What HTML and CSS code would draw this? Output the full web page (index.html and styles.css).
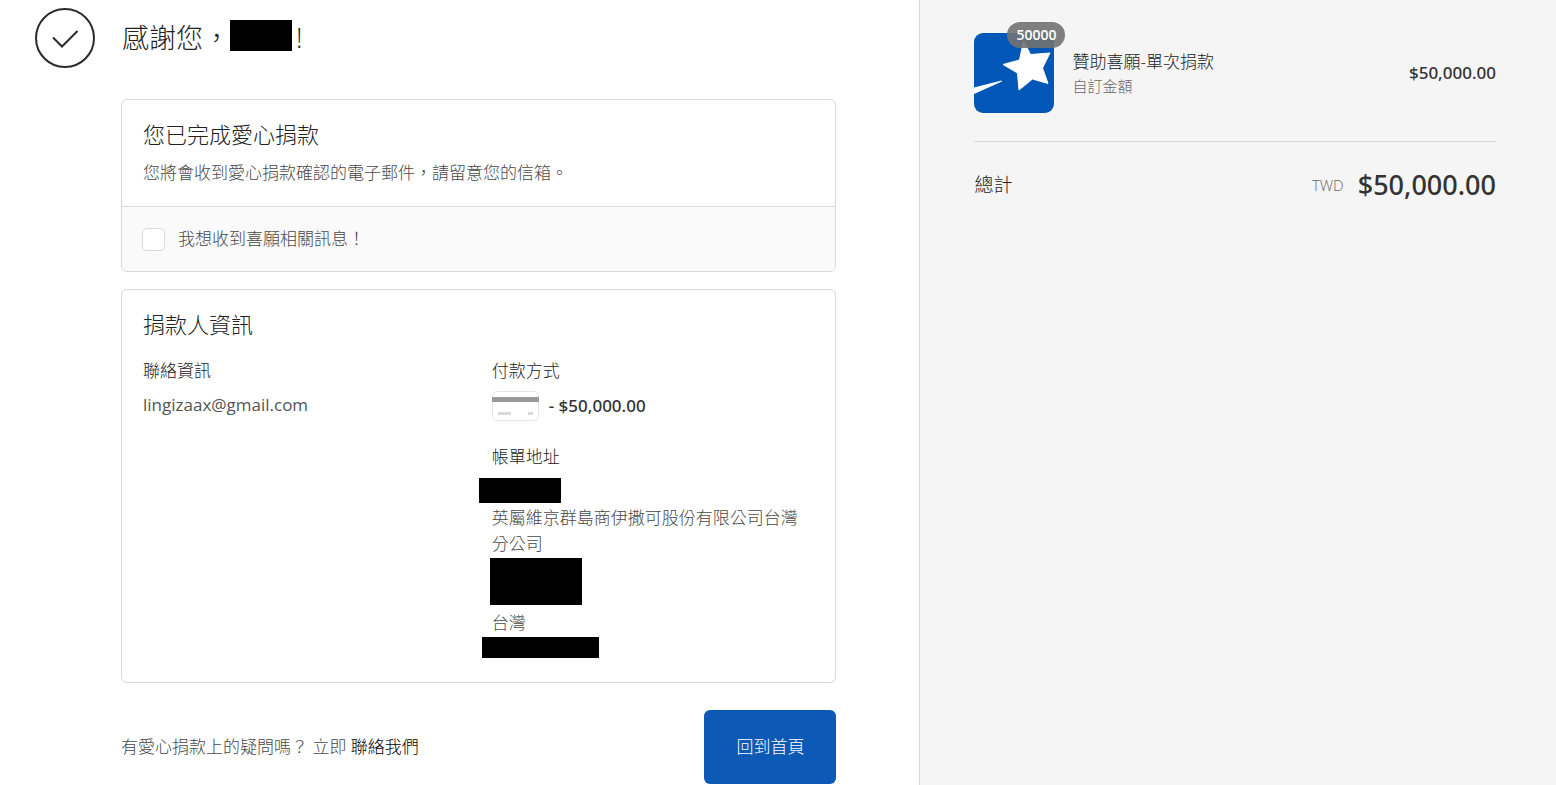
FILE: index.html
```html
<!DOCTYPE html>
<html lang="zh-Hant">
<head>
    <meta charset="UTF-8">
    <meta name="viewport" content="width=device-width, initial-scale=1.0">
    <title>感謝您</title>
    <link rel="stylesheet" href="styles.css">
</head>
<body>
    <div class="page">
        <main class="main">
            <header class="thanks">
                <svg class="check-icon" viewBox="0 0 60 60" aria-hidden="true">
                    <circle cx="30" cy="30" r="29"/>
                    <path d="M18 29.500l9 9 15.500-15.500"/>
                </svg>
                <h1>感謝您，<span class="mask mask-name"></span>!</h1>
            </header>

            <div class="content">
                <section class="card">
                    <div class="card-section">
                        <h2>您已完成愛心捐款</h2>
                        <p class="card-text">您將會收到愛心捐款確認的電子郵件，請留意您的信箱。</p>
                    </div>
                    <div class="card-section subscribe">
                        <input type="checkbox" id="subscribe">
                        <label for="subscribe">我想收到喜願相關訊息！</label>
                    </div>
                </section>

                <section class="card">
                    <div class="card-section">
                        <h2>捐款人資訊</h2>
                        <div class="info">
                            <div>
                                <h3>聯絡資訊</h3>
                                <p class="email">lingizaax@gmail.com</p>
                            </div>
                            <div>
                                <h3>付款方式</h3>
                                <p class="payment">
                                    <svg class="card-icon" viewBox="0 0 47 30" aria-hidden="true">
                                        <rect x="0.500" y="0.500" width="46" height="29" rx="4" fill="#fff" stroke="#e6e6e6"/>
                                        <path fill="#999" d="M0 6h47v5H0z"/>
                                        <path fill="#d9d9d9" d="M6 21h13v3H6zM36 21h5v3h-5z"/>
                                    </svg>
                                    <span class="amount">- $50,000.00</span>
                                </p>
                                <h3>帳單地址</h3>
                                <address>
                                    <span class="mask mask-person"></span>
                                    英屬維京群島商伊撒可股份有限公司台灣分公司
                                    <span class="mask mask-street"></span>
                                    台灣
                                    <span class="mask mask-phone"></span>
                                </address>
                            </div>
                        </div>
                    </div>
                </section>

                <footer class="footer">
                    <p>有愛心捐款上的疑問嗎？ 立即 <a href="#">聯絡我們</a></p>
                    <button type="button">回到首頁</button>
                </footer>
            </div>
        </main>

        <aside class="summary">
            <div class="product">
                <div class="thumb">
                    <svg viewBox="0 0 80 80" aria-hidden="true">
                        <rect width="80" height="80" rx="9" fill="#0057b8"/>
                        <path fill="#fff" stroke="#fff" stroke-linejoin="round" d="M49.500 8L56.500 21.500L76 20L68.500 35L74 50.500L58.500 46L45 57L43.500 40L29 31.500L45.500 27z"/>
                        <path fill="#fff" d="M0 54.500L27.500 47.500L28 48.500L0 61z"/>
                    </svg>
                    <span class="badge">50000</span>
                </div>
                <div class="product-info">
                    <p class="product-name">贊助喜願-單次捐款</p>
                    <p class="product-note">自訂金額</p>
                </div>
                <span class="amount">$50,000.00</span>
            </div>
            <div class="total">
                <span class="total-label">總計</span>
                <span class="currency">TWD</span>
                <span class="total-price">$50,000.00</span>
            </div>
        </aside>
    </div>
</body>
</html>
```
FILE: styles.css
```css
* {
    margin: 0;
    padding: 0;
    box-sizing: border-box;
}
body {
    font-family: "Open Sans", "Noto Sans CJK TC", sans-serif;
    font-size: 17px;
    font-weight: 300;
    line-height: 26px;
    color: #484848;
    background: #fff;
}
.page {
    display: grid;
    grid-template-columns: 13fr 9fr;
    min-height: 100vh;
}
.main {
    padding: 8px 83px 1px 35px;
}
.thanks {
    display: flex;
    align-items: center;
    gap: 27px;
}
.check-icon {
    width: 60px;
    height: 60px;
    fill: none;
    stroke: #2a2a2a;
    stroke-width: 2;
}
h1, h2, h3 {
    font-weight: 300;
    color: #222;
}
h1 {
    display: flex;
    align-items: center;
    font-size: 27px;
    line-height: 36px;
}
h2 {
    font-size: 22px;
    line-height: 28px;
}
h3 {
    font-size: 17px;
}
.content {
    margin-left: 86px;
}
.card {
    margin-top: 17px;
    border: 1px solid #d9d9d9;
    border-radius: 6px;
    overflow: hidden;
}
.card:first-child {
    margin-top: 31px;
}
.card-section {
    padding: 20px 21px;
}
.card-text {
    margin-top: 12px;
}
.subscribe {
    display: flex;
    align-items: center;
    gap: 13px;
    padding: 19px 20px;
    border-top: 1px solid #d9d9d9;
    background: #fafafa;
}
.subscribe input {
    appearance: none;
    width: 23px;
    height: 23px;
    border: 1px solid #d9d9d9;
    border-radius: 5px;
    background: #fff;
}
.subscribe input:checked {
    background: #0d5ab6;
}
.info {
    display: grid;
    grid-template-columns: 1fr 1fr;
    gap: 26px;
    margin-top: 20px;
}
.info h3 {
    margin-bottom: 8px;
}
.email {
    font-weight: 400;
    color: #545454;
}
.payment {
    display: flex;
    align-items: center;
    gap: 10px;
    height: 28px;
    margin-bottom: 24px;
}
.card-icon {
    width: 47px;
    height: 30px;
}
.amount {
    font-family: "Noto Sans", "Open Sans", sans-serif;
    font-weight: 500;
    color: #333;
}
address {
    font-style: normal;
}

/* hidden personal details */
.mask {
    display: block;
    background: #000;
}
.mask-name {
    width: 62px;
    height: 31px;
    margin: 0 4px 5px 0;
}
.mask-person {
    width: 82px;
    height: 25px;
    margin: 0 0 2px -13px;
}
.mask-street {
    width: 92px;
    height: 47px;
    margin: 1px 0 5px -2px;
}
.mask-phone {
    width: 117px;
    height: 21px;
    margin: 1px 0 4px -10px;
}

.footer {
    display: flex;
    align-items: center;
    justify-content: space-between;
    margin-top: 27px;
}
.footer a {
    color: #000;
    text-decoration: none;
}
.footer button {
    padding: 24px 32px;
    border: none;
    border-radius: 6px;
    background: #0d5ab6;
    color: #fff;
    font: inherit;
    cursor: pointer;
}
.summary {
    padding: 33px 60px 0 54px;
    border-left: 1px solid #d9d9d9;
    background: #f5f5f5;
}
.product {
    display: flex;
    align-items: center;
    gap: 18px;
    padding-bottom: 28px;
    border-bottom: 1px solid #d9d9d9;
}
.thumb {
    position: relative;
    width: 80px;
    height: 80px;
}
.badge {
    position: absolute;
    top: -11px;
    right: -11px;
    padding: 0 9px;
    border-radius: 13px;
    background: rgba(114, 114, 114, 0.9);
    color: #fff;
    font-size: 14px;
    font-weight: 600;
}
.product-info {
    flex: 1;
}
.product-name {
    color: #222;
}
.product-note {
    font-size: 15px;
    line-height: 22px;
    color: #666;
}
.total {
    display: flex;
    align-items: center;
    padding-top: 25px;
    line-height: 36px;
}
.total-label {
    flex: 1;
    font-size: 19px;
    color: #222;
}
.currency {
    margin-right: 14px;
    font-size: 15px;
    color: #666;
}
.total-price {
    font-family: "Noto Sans", "Open Sans", sans-serif;
    font-size: 27px;
    font-weight: 500;
    color: #333;
}
```
